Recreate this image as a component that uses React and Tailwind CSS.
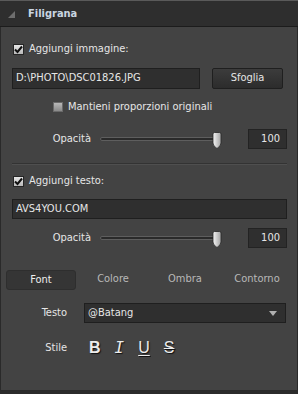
import React from 'react';

const Check = ({ checked }) => (
  <span className="w-[11px] h-[11px] border border-[#262626] flex items-center justify-center bg-gradient-to-b from-[#e8e8e8] to-[#b8b8b8]">
    {checked && (
      <svg width="9" height="9" viewBox="0 0 9 9">
        <path d="M1 4.5 L3.5 7 L8 1.5" stroke="#111" strokeWidth="2" fill="none" />
      </svg>
    )}
  </span>
);

const Thumb = () => (
  <svg width="10" height="17" viewBox="0 0 10 17" className="absolute right-[-2px] top-[-6px]">
    <defs>
      <linearGradient id="tg" x1="0" x2="1" y1="0" y2="0">
        <stop offset="0" stopColor="#f6f6f6" />
        <stop offset="1" stopColor="#a2a2a2" />
      </linearGradient>
    </defs>
    <path d="M1 2 Q1 0.5 2.5 0.5 L7.5 0.5 Q9 0.5 9 2 L9 11 Q9 14 5 16.5 Q1 14 1 11 Z" fill="url(#tg)" stroke="#262626" strokeWidth="0.8" />
  </svg>
);

const OpacityRow = () => (
  <div className="flex items-center h-[20px]">
    <span className="w-[79px] text-right">Opacità</span>
    <div className="relative ml-[9px] w-[121px] h-[4px] rounded-full bg-[#2a2a2a] border border-[#5e5e5e]">
      <Thumb />
    </div>
    <div className="ml-auto w-[39px] h-[20px] bg-[#2f2f2f] border border-[#232323] flex items-center justify-end pr-[6px]">100</div>
  </div>
);

const FormatBtn = ({ children, className }) => (
  <span className={`text-[16px] leading-none text-[#ececec] [text-shadow:1px_1px_1px_#111] ${className}`}>{children}</span>
);

export default function App() {
  return (
    <div className="w-[298px] h-[394px] bg-[#2b2b2b] text-[11px] text-[#e6e6e6]" style={{ fontFamily: '"DejaVu Sans Condensed", "Liberation Sans", sans-serif' }}>
      <div className="h-[27px] bg-[#2e2e2e] border-t border-[#5a5a5a] border-b border-b-[#1c1c1c] flex items-center">
        <svg width="7" height="7" viewBox="0 0 7 7" className="ml-[8px] mt-[1px]">
          <path d="M7 0 L7 7 L0 7 Z" fill="#6e6e6e" />
        </svg>
        <span className="ml-[13px] font-bold text-[#c9d5e1] text-[11px] mt-[1px]">Filigrana</span>
      </div>
      <div className="h-[364px] bg-[#434343] border-l border-r border-b border-[#2a2a2a] pl-[11px] pr-[10px] pt-[15px]">
        <label className="flex items-center gap-[5px] h-[14px] pl-[1px]">
          <Check checked />
          <span>Aggiungi immagine:</span>
        </label>
        <div className="flex items-center mt-[12px]">
          <div className="w-[188px] h-[21px] bg-[#2f2f2f] border border-[#1f1f1f] flex items-center px-[3px]">D:\PHOTO\DSC01826.JPG</div>
          <button className="ml-auto mr-[4px] w-[71px] h-[21px] -mt-[1px] rounded-[2px] bg-gradient-to-b from-[#3c3c3c] to-[#2c2c2c] border border-[#1f1f1f]">Sfoglia</button>
        </div>
        <label className="flex items-center gap-[5px] mt-[11px] pl-[41px] h-[14px]">
          <span className="w-[10px] h-[10px] bg-gradient-to-b from-[#b8b8b8] to-[#8a8a8a] border border-[#6a6a6a]" />
          <span>Mantieni proporzioni originali</span>
        </label>
        <div className="mt-[15px]">
          <OpacityRow />
        </div>
        <div className="mt-[14px] border-t border-[#333] border-b border-b-[#4f4f4f]" />
        <label className="flex items-center gap-[5px] h-[14px] pl-[1px] mt-[9px]">
          <Check checked />
          <span>Aggiungi testo:</span>
        </label>
        <div className="mt-[11px] h-[20px] bg-[#2f2f2f] border border-[#1f1f1f] flex items-center px-[3px]">AVS4YOU.COM</div>
        <div className="mt-[9px]">
          <OpacityRow />
        </div>
        <div className="grid grid-cols-4 mt-[22px] h-[20px] -ml-[7px] -mr-[6px]">
          <span className="mx-[1px] rounded-[3px] bg-[#353535] border border-[#2e2e2e] flex items-center justify-center text-[#eee]">Font</span>
          <span className="flex items-center justify-center text-[#b8b8b8] -mt-[2px]">Colore</span>
          <span className="flex items-center justify-center text-[#b8b8b8] -mt-[2px]">Ombra</span>
          <span className="flex items-center justify-center text-[#b8b8b8] -mt-[2px]">Contorno</span>
        </div>
        <div className="flex items-center mt-[13px]">
          <span className="w-[55px] text-right">Testo</span>
          <div className="ml-[17px] w-[202px] h-[20px] bg-[#2f2f2f] border border-[#1f1f1f] flex items-center pl-[3px] pr-[8px]">
            <span>@Batang</span>
            <svg width="8" height="5" viewBox="0 0 8 5" className="ml-auto">
              <path d="M0 0 L8 0 L4 5 Z" fill="#b0b0b0" />
            </svg>
          </div>
        </div>
        <div className="flex items-center mt-[15px] h-[20px]">
          <span className="w-[55px] text-right">Stile</span>
          <div className="flex items-center ml-[22px] gap-[14px]">
            <FormatBtn className="font-bold [font-family:'Liberation_Sans',sans-serif]">B</FormatBtn>
            <FormatBtn className="italic [font-family:'DejaVu_Sans_Mono',monospace]">I</FormatBtn>
            <FormatBtn className="underline underline-offset-2 [font-family:'Liberation_Sans',sans-serif]">U</FormatBtn>
            <FormatBtn className="line-through [font-family:'Liberation_Sans',sans-serif]">S</FormatBtn>
          </div>
        </div>
      </div>
    </div>
  );
}
